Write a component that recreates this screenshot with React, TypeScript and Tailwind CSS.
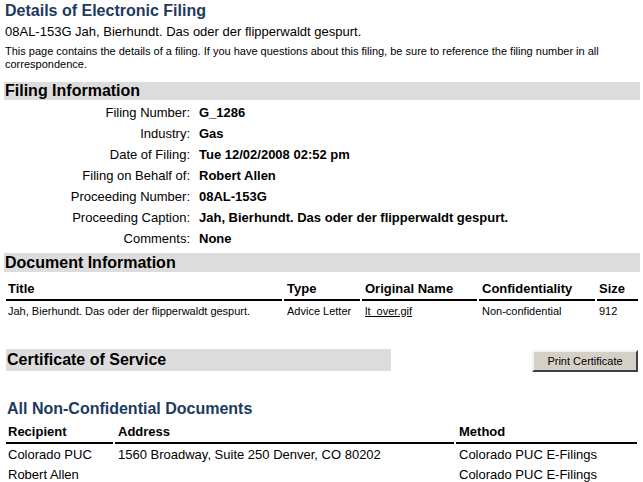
import React from "react";

const rows: [string, string][] = [
  ["Filing Number:", "G_1286"],
  ["Industry:", "Gas"],
  ["Date of Filing:", "Tue 12/02/2008 02:52 pm"],
  ["Filing on Behalf of:", "Robert Allen"],
  ["Proceeding Number:", "08AL-153G"],
  ["Proceeding Caption:", "Jah, Bierhundt. Das oder der flipperwaldt gespurt."],
  ["Comments:", "None"],
];

export default function App() {
  return (
    <div className="w-[643px] h-[482px] overflow-hidden bg-white text-black font-['Liberation_Sans',Arial,sans-serif]">
      <div className="pl-[5px] pt-[1px]">
        <h1 className="text-[16px] leading-[20px] font-bold text-[#1c3a5e]">Details of Electronic Filing</h1>
        <div className="text-[13px] leading-[16px] mt-[3px]">08AL-153G Jah, Bierhundt. Das oder der flipperwaldt gespurt.</div>
        <div className="text-[11px] leading-[13px] mt-[5px] pr-[40px]">
          This page contains the details of a filing. If you have questions about this filing, be sure to reference the filing number in all correspondence.
        </div>
      </div>

      <div className="mx-[4px] w-[636px] mt-[11px] h-[18px] bg-[#dcdcdc] text-[16px] leading-[18px] font-bold pl-[1px]">Filing Information</div>
      <div className="grid grid-cols-[190px_1fr] gap-x-[9px] mt-[2px] text-[13px]">
        {rows.map(([k, v]) => (
          <React.Fragment key={k}>
            <div className="h-[21px] leading-[21px] text-right">{k}</div>
            <div className="h-[21px] leading-[21px] font-bold">{v}</div>
          </React.Fragment>
        ))}
      </div>

      <div className="mx-[4px] w-[636px] mt-[4px] h-[19px] bg-[#dcdcdc] text-[16px] leading-[19px] font-bold pl-[1px]">Document Information</div>
      <table className="ml-[4px] mt-[7px] border-separate border-spacing-x-[2px] border-spacing-y-0 text-left">
        <thead>
          <tr className="text-[13px] font-bold">
            <th className="w-[276px] pl-[2px] h-[20px] leading-[20px] border-b-2 border-black">Title</th>
            <th className="w-[76px] pl-[3px] border-b-2 border-black">Type</th>
            <th className="w-[115px] pl-[3px] border-b-2 border-black">Original Name</th>
            <th className="w-[116px] pl-[3px] border-b-2 border-black">Confidentiality</th>
            <th className="w-[41px] pl-[2px] border-b-2 border-black">Size</th>
          </tr>
        </thead>
        <tbody>
          <tr className="text-[11px]">
            <td className="pl-[2px] h-[20px] leading-[20px]">Jah, Bierhundt. Das oder der flipperwaldt gespurt.</td>
            <td className="pl-[3px]">Advice Letter</td>
            <td className="pl-[3px]"><span className="underline">lt_over.gif</span></td>
            <td className="pl-[3px]">Non-confidential</td>
            <td className="pl-[2px]">912</td>
          </tr>
        </tbody>
      </table>

      <div className="flex items-start mt-[28px] pl-[6px]">
        <div className="w-[385px] h-[22px] bg-[#dcdcdc] text-[16px] leading-[22px] font-bold pl-[1px]">Certificate of Service</div>
        <button className="ml-[141px] mt-[1px] w-[106px] h-[22px] bg-[#d4d0c8] text-[11px] leading-[18px] border-2 border-t-[#f4f3f0] border-l-[#f4f3f0] border-b-[#404040] border-r-[#404040] font-['Liberation_Sans',Arial,sans-serif]">
          Print Certificate
        </button>
      </div>

      <h2 className="ml-[7px] mt-[27px] text-[16px] leading-[20px] font-bold text-[#1c3a5e]">All Non-Confidential Documents</h2>
      <table className="ml-[4px] mt-[2px] border-separate border-spacing-x-[2px] border-spacing-y-0 text-left text-[13px]">
        <thead>
          <tr className="font-bold">
            <th className="w-[107px] pl-[2px] h-[21px] leading-[21px] border-b-2 border-black">Recipient</th>
            <th className="w-[339px] pl-[3px] border-b-2 border-black">Address</th>
            <th className="w-[181px] pl-[3px] border-b-2 border-black">Method</th>
          </tr>
        </thead>
        <tbody>
          <tr>
            <td className="pl-[2px] h-[21px] leading-[21px]">Colorado PUC</td>
            <td className="pl-[3px]">1560 Broadway, Suite 250 Denver, CO 80202</td>
            <td className="pl-[3px]">Colorado PUC E-Filings</td>
          </tr>
          <tr>
            <td className="pl-[2px] h-[20px] leading-[20px]">Robert Allen</td>
            <td className="pl-[3px]"></td>
            <td className="pl-[3px]">Colorado PUC E-Filings</td>
          </tr>
        </tbody>
      </table>
    </div>
  );
}
